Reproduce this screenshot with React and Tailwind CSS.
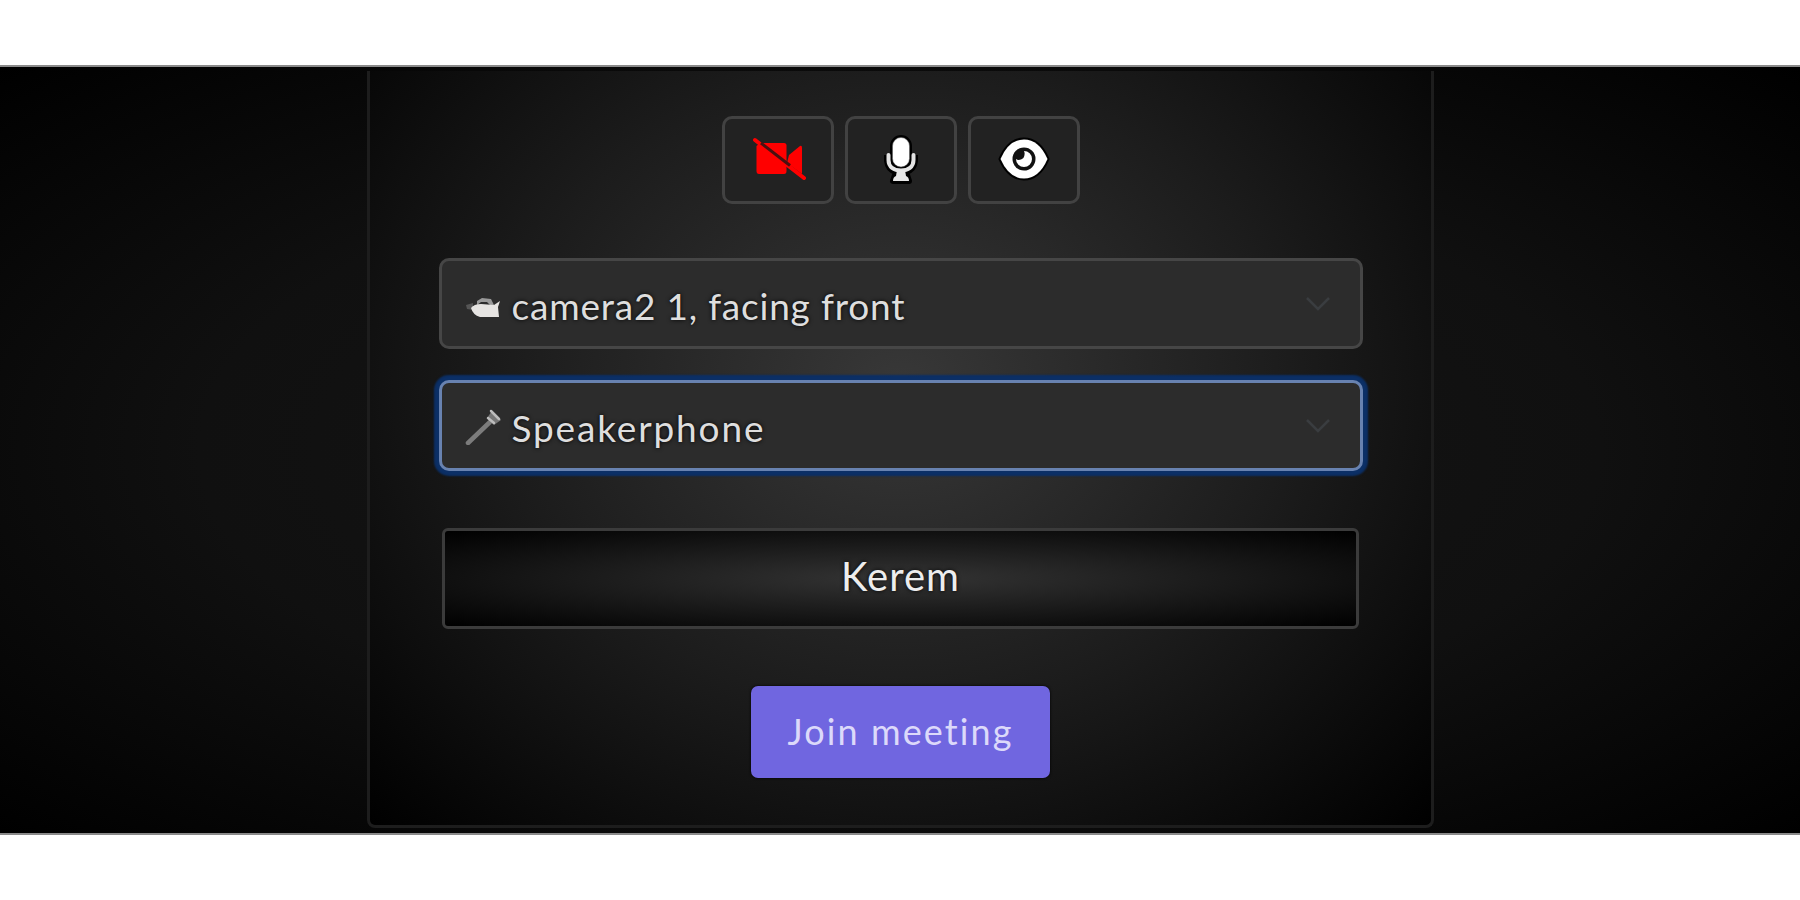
import React from "react";

const devices = [
  { id: "camera", label: "camera2 1, facing front" },
  { id: "mic", label: "Speakerphone", focused: true },
];

function VideoOffIcon() {
  return (
    <svg className="mt-[-2px] ml-[2px]" width="56" height="46" viewBox="0 0 56 46">
      <path d="M9 7H33Q35.500 7 35.500 9.500V35Q35.500 38 33 38H8Q5.500 38 5.500 35V10Z" fill="#ff0000" />
      <path d="M38 19L49 10Q51 9 51 12V38L36 27Z" fill="#ff0000" />
      <path d="M4 4L53 42" stroke="#ff0000" strokeWidth="4" strokeLinecap="round" />
      <path d="M10 7L39 29.500" stroke="#4a1010" strokeWidth="3" />
    </svg>
  );
}

function MicIcon() {
  return (
    <svg width="44" height="54" viewBox="0 0 44 54">
      <g stroke="#000" strokeWidth="6" strokeLinejoin="round">
        <rect x="14" y="5" width="16" height="30" rx="8" />
        <path d="M8 22V28Q9 37 17 39L14 48H30L27 39Q35 37 36 28V22" />
      </g>
      <path d="M9.500 22V27C9.500 34 15 37.500 22 37.500S34.500 34 34.500 27V22" fill="none" stroke="#e4e4e4" strokeWidth="4" strokeLinecap="round" />
      <path d="M18 37H26L27 43Q30 44 30 48H14Q14 44 17 43Z" fill="#e8e8e8" />
      <rect x="13.500" y="4.500" width="17" height="29.500" rx="8.500" fill="#fff" stroke="#555" strokeWidth="0.500" />
    </svg>
  );
}

function EyeIcon() {
  return (
    <svg className="mt-[-2px]" width="56" height="48" viewBox="0 0 56 48">
      <path
        d="M4.500 24Q13 4.500 28 4.500T51.500 24Q43 43.500 28 43.500T4.500 24Z"
        fill="#fff"
        stroke="#000"
        strokeWidth="4"
        strokeLinejoin="round"
        paintOrder="stroke"
      />
      <circle cx="28" cy="24" r="11.500" fill="#111" />
      <path d="M28 16A8 8 0 1 1 20 24Q22 25.500 25 24.500T28.500 20Q29 18 28 16Z" fill="#fff" />
    </svg>
  );
}

function CameraGlyph() {
  return (
    <svg width="38" height="38" viewBox="0 0 38 38">
      <path d="M1 20L8 18V25L2 24Z" fill="#555" />
      <path d="M12 16L17 13L26 14L29 20H25L22 17H16L12 20Z" fill="#999" />
      <path d="M6 23Q9 19 16 19L29 20L35 16L33 22L34 32H15Q8 30 6 23Z" fill="#e6e4e2" />
    </svg>
  );
}

function MicGlyph() {
  return (
    <svg width="38" height="38" viewBox="0 0 38 38">
      <path d="M3 36L25 15" stroke="#7c7c7c" strokeWidth="4.500" strokeLinecap="round" />
      <path d="M22 11L27 4L36 13L29 18Z" fill="#777" />
      <path d="M26 4L34 12M23 11L29 16" stroke="#bdbdbd" strokeWidth="2.500" strokeLinecap="round" />
    </svg>
  );
}

function IconButton({ children }) {
  return (
    <button className="flex h-[88px] w-[112px] items-center justify-center rounded-[10px] border-[3px] border-[#424242] bg-[#222222]">
      {children}
    </button>
  );
}

function DeviceSelect({ device }) {
  return (
    <button
      className={`flex h-[91px] w-[924px] items-center rounded-[10px] border-[3px] bg-[#2c2c2c] pr-[30px] pl-[23px] ${
        device.focused
          ? "border-[#6882b0] shadow-[0_0_2px_5px_#0b2f66]"
          : "border-[#464646]"
      }`}
    >
      {device.id === "camera" ? <CameraGlyph /> : <MicGlyph />}
      <span
        className={`ml-[9px] grow pt-[3px] text-left text-[37px] leading-none whitespace-nowrap text-[#dedede] [text-shadow:0_0_4px_#000] ${
          device.focused ? "tracking-[1.85px]" : "tracking-[0.8px]"
        }`}
      >
        {device.label}
      </span>
      <svg width="24" height="16" viewBox="0 0 24 16" fill="none" stroke="#3a3d40" strokeWidth="2.5">
        <path d="M1 2L12 13L23 2" />
      </svg>
    </button>
  );
}

export default function App() {
  return (
    <div className="flex h-[900px] w-[1800px] flex-col bg-white pt-[65px] font-['Lato',sans-serif]">
      <main className="flex h-[770px] justify-center overflow-hidden border-y-2 border-[#8a8a8a] bg-[radial-gradient(ellipse_at_center,#161616_0%,#101010_55%,#000_100%)]">
        {/* lobby card */}
        <section className="mt-[4px] ml-[1px] flex h-[757px] w-[1067px] flex-col items-center rounded-b-[8px] border-x-[3px] border-b-[3px] border-[#1d1d1d] bg-[radial-gradient(ellipse_at_50%_42%,#383838_0%,#1c1c1c_52%,#000_100%)] pt-[45px]">
          <div className="flex gap-[11px]">
            <IconButton>
              <VideoOffIcon />
            </IconButton>
            <IconButton>
              <MicIcon />
            </IconButton>
            <IconButton>
              <EyeIcon />
            </IconButton>
          </div>

          <div className="mt-[54px] flex flex-col gap-[31px]">
            {devices.map((device) => (
              <DeviceSelect key={device.id} device={device} />
            ))}
          </div>

          <input
            className="mt-[57px] h-[101px] w-[917px] rounded-[6px] border-[3px] border-[#3b3b3b] bg-[radial-gradient(ellipse_at_center,#343434_0%,#000_100%)] pb-[6px] text-center text-[40px] tracking-[1px] text-[#ededed] [text-shadow:0_0_4px_#000]"
            defaultValue="Kerem"
          />

          <button className="mt-[57px] h-[92px] w-[299px] rounded-[7px] bg-[#7066e0] pb-[3px] text-[36px] tracking-[2.1px] text-[#dcd9fa] shadow-[0_0_3px_#000]">
            Join meeting
          </button>
        </section>
      </main>
    </div>
  );
}
